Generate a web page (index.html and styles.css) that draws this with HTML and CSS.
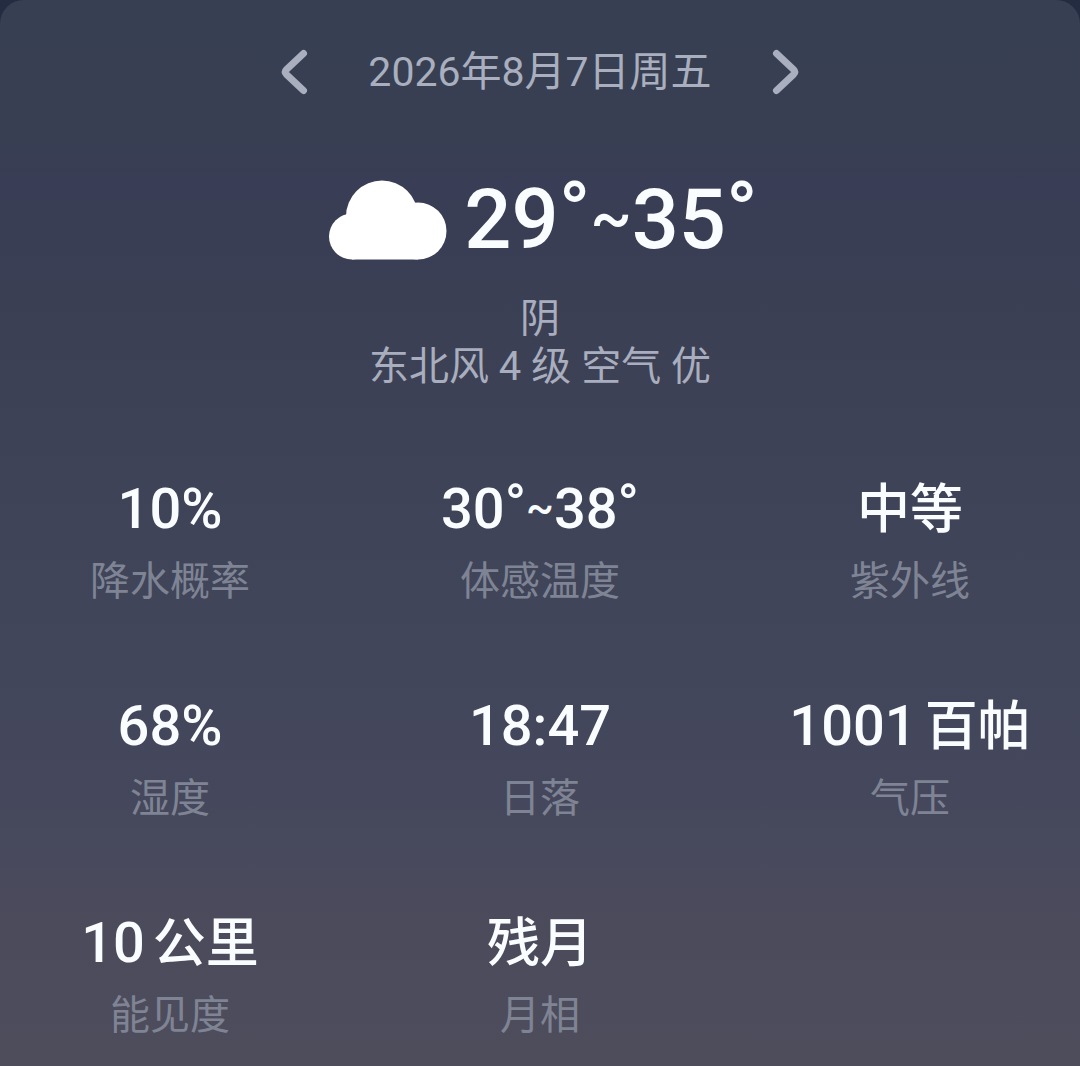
FILE: index.html
```html
<!DOCTYPE html>
<html lang="zh-CN">
<head>
    <meta charset="UTF-8">
    <meta name="viewport" content="width=device-width, initial-scale=1.0">
    <title>天气</title>
    <link rel="stylesheet" href="styles.css">
</head>
<body>

<main class="weather-card">
    <header class="date-nav">
        <button type="button" class="nav-button" aria-label="前一天">
            <svg width="28" height="46" viewBox="0 0 28 46"><path d="M23.500 4.500 L6.500 20.500 Q4 23 6.500 25.500 L23.500 41.500"/></svg>
        </button>
        <h1 class="date">2026年8月7日周五</h1>
        <button type="button" class="nav-button" aria-label="后一天">
            <svg width="28" height="46" viewBox="0 0 28 46"><path d="M4.500 4.500 L21.500 20.500 Q24 23 21.500 25.500 L4.500 41.500"/></svg>
        </button>
    </header>

    <section class="summary">
        <div class="temperature">
            <svg class="cloud" width="120" height="80" viewBox="0 0 120 80">
                <circle cx="24" cy="56.500" r="23"/>
                <circle cx="54" cy="36.500" r="36"/>
                <circle cx="90" cy="51" r="28.500"/>
                <path d="M24 40 H90 V79.500 H24 Z"/>
            </svg>
            <div>29<span class="degree">°</span><span class="tilde">~</span>35<span class="degree">°</span></div>
        </div>
        <p class="condition">阴</p>
        <p class="condition">东北风 4 级 空气 优</p>
    </section>

    <dl class="details">
        <div class="item">
            <dt>降水概率</dt>
            <dd>10%</dd>
        </div>
        <div class="item">
            <dt>体感温度</dt>
            <dd>30<span class="degree">°</span><span class="tilde">~</span>38<span class="degree">°</span></dd>
        </div>
        <div class="item">
            <dt>紫外线</dt>
            <dd><span class="cjk">中等</span></dd>
        </div>
        <div class="item">
            <dt>湿度</dt>
            <dd>68%</dd>
        </div>
        <div class="item">
            <dt>日落</dt>
            <dd>18:47</dd>
        </div>
        <div class="item">
            <dt>气压</dt>
            <dd>1001<span class="cjk unit">百帕</span></dd>
        </div>
        <div class="item">
            <dt>能见度</dt>
            <dd>10<span class="cjk unit">公里</span></dd>
        </div>
        <div class="item">
            <dt>月相</dt>
            <dd><span class="cjk">残月</span></dd>
        </div>
    </dl>
</main>

</body>
</html>
```
FILE: styles.css
```css
* {
    box-sizing: border-box;
}
body {
    margin: 0;
    background-color: #232c41;
    font-family: Roboto, "Noto Sans CJK SC", sans-serif;
}
.weather-card {
    min-height: 100vh;
    padding: 40px 10px 24px;
    border-radius: 24px 24px 0 0;
    background: linear-gradient(#373f52 0%, #383f52 12%, #393d55 17%, #3c4054 32%, #3f4459 50%, #45485c 75%, #4c4b5c 88%, #4e4d5c 100%);
    color: #fafdff;
}
.date-nav {
    display: flex;
    justify-content: center;
    align-items: center;
    gap: 60px;
    height: 64px;
}
.nav-button {
    display: flex;
    padding: 0;
    border: none;
    background: none;
    color: #a9afbf;
    cursor: pointer;
}
.nav-button svg {
    fill: none;
    stroke: currentColor;
    stroke-width: 7;
    stroke-linecap: round;
}
.date {
    margin: 0;
    font-size: 41px;
    font-weight: 400;
    line-height: 64px;
    color: #a9afbf;
}
.summary {
    padding-top: 66px;
    text-align: center;
}
.temperature {
    display: flex;
    justify-content: center;
    align-items: center;
    gap: 16px;
    height: 100px;
    margin-bottom: 25px;
    padding-left: 6px;
    font-size: 83px;
    font-weight: 500;
    line-height: 96px;
}
.cloud {
    fill: #fff;
}
/* raised ring and a smaller, lifted tilde between the two temperatures */
.degree {
    line-height: 0;
    vertical-align: 0.08em;
}
.tilde {
    font-size: 0.75em;
    line-height: 0;
    vertical-align: 0.15em;
}
.condition {
    margin: 0;
    font-size: 40px;
    line-height: 48px;
    color: #a9aebf;
}
.details {
    display: grid;
    grid-template-columns: repeat(3, 1fr);
    gap: 85px 50px;
    margin: 83px 0 0;
}
.item {
    display: flex;
    flex-direction: column-reverse;
    gap: 14px;
    text-align: center;
    white-space: nowrap;
}
.item dt {
    font-size: 40px;
    line-height: 48px;
    color: #7f8494;
}
.item dd {
    height: 70px;
    margin: 0;
    font-size: 56px;
    font-weight: 500;
    line-height: 70px;
}
.cjk {
    font-size: 53px;
}
.unit {
    margin-left: 8px;
}
```
